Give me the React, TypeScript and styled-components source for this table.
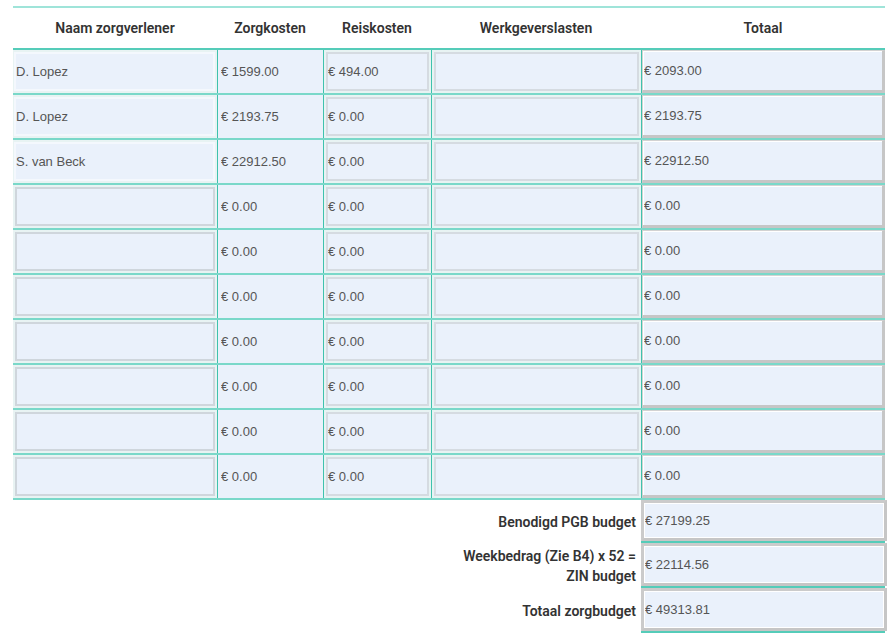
import React from "react";
import styled, { createGlobalStyle } from "styled-components";

const Global = createGlobalStyle`
  html, body { margin: 0; padding: 0; background: #ffffff; }
  body { font-family: "Liberation Sans", Arial, sans-serif; }
`;

const COLS = "204px 106px 108px 210px 244px";

const Page = styled.div`
  padding: 6px 0 0 13px;
`;

const Table = styled.div`
  width: 872px;
  display: flex;
  flex-direction: column;
`;

const HeaderRow = styled.div`
  display: grid;
  grid-template-columns: ${COLS};
  height: 40px;
  border-top: 2px solid #9fe4d9;
  border-bottom: 2px solid #55ccb9;
`;

const HeaderCell = styled.div`
  display: flex;
  align-items: center;
  justify-content: center;
  font-family: Roboto, "Liberation Sans", sans-serif;
  font-weight: 600;
  font-size: 14px;
  color: #333333;
`;

const Row = styled.div`
  display: grid;
  grid-template-columns: ${COLS};
  height: 43px;
  border-bottom: 2px solid #7ad8c9;
`;

const Cell = styled.div<{ $first?: boolean }>`
  background: #e8f3f3;
  border-left: ${(p) => (p.$first ? "none" : "1px solid #3fc2ad")};
  padding: 2px;
  display: flex;
  align-items: stretch;
`;

const Field = styled.input<{ $variant: "name" | "plain" | "box" | "total" }>`
  flex: 1;
  min-width: 0;
  margin: 0;
  padding: 0 0 0 1px;
  background: #eaf1fb;
  font-family: "Liberation Sans", Arial, sans-serif;
  font-size: 13px;
  color: #555555;
  outline: none;
  box-sizing: border-box;
  border-style: solid;
  ${(p) =>
    p.$variant === "name"
      ? "border-width: 2px; border-color: #f4f8fd; padding-left: 0; margin-left: -1px;"
      : p.$variant === "plain"
      ? "border-width: 0; margin: -2px; padding-left: 3px;"
      : p.$variant === "box"
      ? "border-width: 2px; border-color: #d5dbe1; padding-left: 0;"
      : "border-width: 1px 3px 3px 1px; border-color: #d2d2d2 #c6c6c6 #c6c6c6 #d2d2d2; box-shadow: inset 1px 1px 0 #ffffff; padding-left: 1px; margin: -2px -2px -2px -2px;"}
`;

const EmptyName = styled(Field)`
  border-color: #cfd6dc;
`;

const SummaryRow = styled.div<{ $h: number }>`
  display: grid;
  grid-template-columns: ${COLS};
  height: ${(p) => p.$h}px;
`;

const Label = styled.div`
  grid-column: 4;
  display: flex;
  align-items: center;
  justify-content: flex-end;
  text-align: right;
  padding: 0 5px 0 24px;
  font-family: Roboto, "Liberation Sans", sans-serif;
  font-weight: 600;
  font-size: 14px;
  line-height: 20px;
  color: #333333;
`;

const SummaryValue = styled.div`
  grid-column: 5;
  display: flex;
  border-bottom: 2px solid #55ccb9;
  padding: 0;
`;

const SummaryField = styled.input`
  flex: 1;
  min-width: 0;
  margin: 0;
  background: #eaf1fb;
  font-family: "Liberation Sans", Arial, sans-serif;
  font-size: 13px;
  color: #555555;
  outline: none;
  box-sizing: border-box;
  border-style: solid;
  border-width: 3px;
  border-color: #cbcbcb #c6c6c6 #c6c6c6 #cbcbcb;
  box-shadow: inset -1px -1px 0 #ffffff, inset 1px 1px 0 #ffffff;
  padding: 0 0 0 1px;
  margin-right: -2px;
`;

type Line = { name: string; zorg: string; reis: string; totaal: string };

const rows: Line[] = [
  { name: "D. Lopez", zorg: "€ 1599.00", reis: "€ 494.00", totaal: "€ 2093.00" },
  { name: "D. Lopez", zorg: "€ 2193.75", reis: "€ 0.00", totaal: "€ 2193.75" },
  { name: "S. van Beck", zorg: "€ 22912.50", reis: "€ 0.00", totaal: "€ 22912.50" },
  ...Array.from({ length: 7 }, () => ({ name: "", zorg: "€ 0.00", reis: "€ 0.00", totaal: "€ 0.00" })),
];

const summary = [
  { label: "Benodigd PGB budget", value: "€ 27199.25", h: 43 },
  { label: "Weekbedrag (Zie B4) x 52 = ZIN budget", value: "€ 22114.56", h: 45 },
  { label: "Totaal zorgbudget", value: "€ 49313.81", h: 45 },
];

export default function App() {
  return (
    <Page>
      <Global />
      <Table>
        <HeaderRow>
          <HeaderCell>Naam zorgverlener</HeaderCell>
          <HeaderCell>Zorgkosten</HeaderCell>
          <HeaderCell>Reiskosten</HeaderCell>
          <HeaderCell>Werkgeverslasten</HeaderCell>
          <HeaderCell>Totaal</HeaderCell>
        </HeaderRow>
        {rows.map((r, i) => (
          <Row key={i}>
            <Cell $first>
              {r.name ? (
                <Field $variant="name" readOnly value={r.name} />
              ) : (
                <EmptyName $variant="box" readOnly value="" />
              )}
            </Cell>
            <Cell>
              <Field $variant="plain" readOnly value={r.zorg} />
            </Cell>
            <Cell>
              <Field $variant="box" readOnly value={r.reis} />
            </Cell>
            <Cell>
              <Field $variant="box" readOnly value="" />
            </Cell>
            <Cell>
              <Field $variant="total" readOnly value={r.totaal} />
            </Cell>
          </Row>
        ))}
        {summary.map((s) => (
          <SummaryRow key={s.label} $h={s.h}>
            <Label>{s.label}</Label>
            <SummaryValue>
              <SummaryField readOnly value={s.value} />
            </SummaryValue>
          </SummaryRow>
        ))}
      </Table>
    </Page>
  );
}
